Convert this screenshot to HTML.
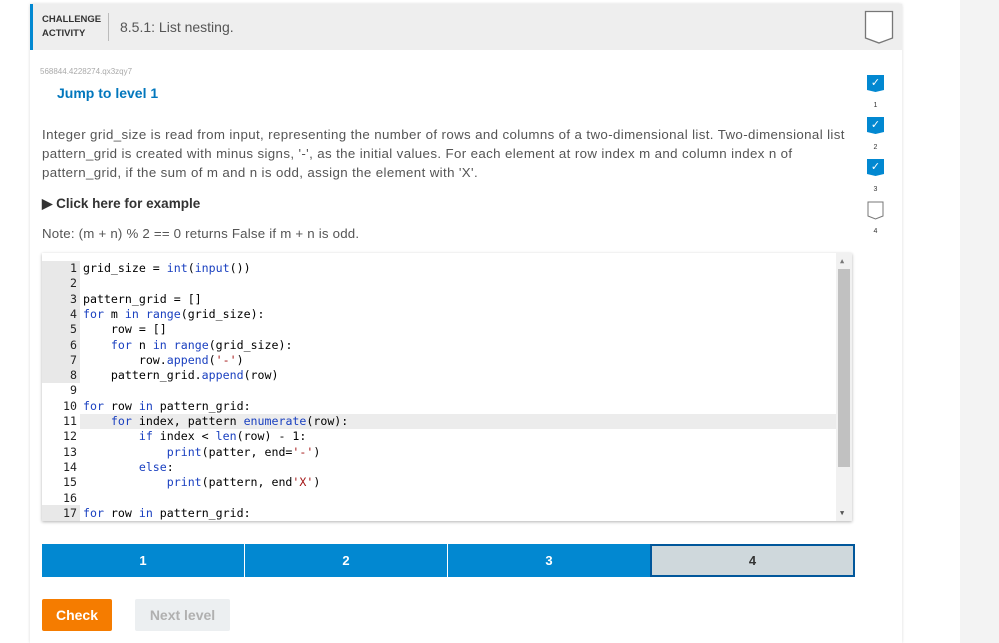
<!DOCTYPE html>
<html><head><style>
body{margin:0;width:999px;height:643px;background:#fff;font-family:"Liberation Sans",sans-serif;position:relative;overflow:hidden}
.a{position:absolute}
.right{left:960px;top:0;width:39px;height:643px;background:#f3f3f3}
.card{left:30px;top:4px;width:872px;height:639px;background:#fff;box-shadow:0 0 3px rgba(0,0,0,.15)}
.hdr{left:30px;top:4px;width:872px;height:46px;background:#eeeeee;border-left:3px solid #0288d1;box-sizing:border-box}
.code{left:42px;top:253px;width:810px;height:268px;background:#fff;box-shadow:0 1px 3px rgba(0,0,0,.3);overflow:hidden;font-family:"DejaVu Sans Mono","Liberation Mono",monospace;font-size:11.6px}
.ln{position:absolute;left:0;width:35px;text-align:right;color:#222;height:15.3px;line-height:15.3px}
.cl{position:absolute;left:41px;white-space:pre;height:15.3px;line-height:15.3px;color:#000}
.k{color:#1a40c0}.f{color:#1a40c0}.s{color:#a31515}
.chk{width:17px;height:17px;background:#0288d1;position:absolute;left:867px;color:#fff;font-size:11px;text-align:center;line-height:16px;clip-path:polygon(0 0,100% 0,100% 88%,50% 100%,0 88%)}
.num{position:absolute;left:867px;width:17px;text-align:center;font-size:7px;color:#333}
.seg{position:absolute;top:544px;height:33px;background:#0288d1;color:#fff;font-weight:bold;font-size:13px;text-align:center;line-height:33px}
</style></head><body>
<div class="a right"></div>
<div class="a card"></div>
<div class="a hdr"></div>
<div class="a" style="left:42px;top:13px;font-size:9.5px;font-weight:bold;color:#333;line-height:14px">CHALLENGE<br>ACTIVITY</div>
<div class="a" style="left:108px;top:13px;width:1px;height:28px;background:#bbb"></div>
<div class="a" style="left:120px;top:19px;font-size:14px;color:#555">8.5.1: List nesting.</div>
<svg class="a" style="left:864px;top:10px" width="30" height="35"><path d="M1.5 1.5H28.5V28L15 33 1.5 28Z" fill="#fff" stroke="#777" stroke-width="1.3"/></svg>
<div class="a" style="left:40px;top:67px;font-size:8px;color:#aaa">568844.4228274.qx3zqy7</div>
<div class="a" style="left:57px;top:85px;font-size:14px;font-weight:bold;color:#0277bd">Jump to level 1</div>
<div class="a" style="left:42px;top:125px;white-space:nowrap;font-size:13.3px;line-height:19px;color:#555;letter-spacing:0.37px">Integer grid_size is read from input, representing the number of rows and columns of a two-dimensional list. Two-dimensional list<br>pattern_grid is created with minus signs, '-', as the initial values. For each element at row index m and column index n of<br>pattern_grid, if the sum of m and n is odd, assign the element with 'X'.</div>
<div class="a" style="left:42px;top:196px;font-size:13.5px;font-weight:bold;color:#333">▶ Click here for example</div>
<div class="a" style="left:42px;top:226px;font-size:13.3px;color:#555;letter-spacing:0.2px">Note: (m + n) % 2 == 0 returns False if m + n is odd.</div>

<div class="chk" style="top:75px">✓</div><div class="num" style="top:102px">1</div>
<div class="chk" style="top:117px">✓</div><div class="num" style="top:144px">2</div>
<div class="chk" style="top:159px">✓</div><div class="num" style="top:186px">3</div>
<svg class="a" style="left:867px;top:201px" width="18" height="19"><path d="M1 1H16V15L8.5 18 1 15Z" fill="#fff" stroke="#777"/></svg><div class="num" style="top:228px">4</div>

<div class="a code">
<div class="a" style="left:0;top:8px;width:38px;height:122px;background:#e8e8e8"></div>
<div class="a" style="left:0;top:252px;width:38px;height:16px;background:#e8e8e8"></div>
<div class="a" style="left:38px;top:161px;width:756px;height:15px;background:#ececec"></div>
<div class="a" style="left:794px;top:0;width:16px;height:268px;background:#f1f1f1"></div>
<div class="a" style="left:796px;top:16px;width:12px;height:198px;background:#c1c1c1"></div>
<div class="a" style="left:798px;top:4px;font-size:7px;color:#777">▲</div>
<div class="a" style="left:798px;top:256px;font-size:7px;color:#555">▼</div>
<div style="position:absolute;top:8px;left:0;width:790px">
<div class="ln" style="top:0">1</div><div class="cl" style="top:0">grid_size = <span class="f">int</span>(<span class="f">input</span>())</div>
<div class="ln" style="top:15.3px">2</div>
<div class="ln" style="top:30.6px">3</div><div class="cl" style="top:30.6px">pattern_grid = []</div>
<div class="ln" style="top:45.9px">4</div><div class="cl" style="top:45.9px"><span class="k">for</span> m <span class="k">in</span> <span class="f">range</span>(grid_size):</div>
<div class="ln" style="top:61.2px">5</div><div class="cl" style="top:61.2px">    row = []</div>
<div class="ln" style="top:76.5px">6</div><div class="cl" style="top:76.5px">    <span class="k">for</span> n <span class="k">in</span> <span class="f">range</span>(grid_size):</div>
<div class="ln" style="top:91.8px">7</div><div class="cl" style="top:91.8px">        row.<span class="f">append</span>(<span class="s">'-'</span>)</div>
<div class="ln" style="top:107.1px">8</div><div class="cl" style="top:107.1px">    pattern_grid.<span class="f">append</span>(row)</div>
<div class="ln" style="top:122.4px">9</div>
<div class="ln" style="top:137.7px">10</div><div class="cl" style="top:137.7px"><span class="k">for</span> row <span class="k">in</span> pattern_grid:</div>
<div class="ln" style="top:153px">11</div><div class="cl" style="top:153px">    <span class="k">for</span> index, pattern <span class="f">enumerate</span>(row):</div>
<div class="ln" style="top:168.3px">12</div><div class="cl" style="top:168.3px">        <span class="k">if</span> index &lt; <span class="f">len</span>(row) - 1:</div>
<div class="ln" style="top:183.6px">13</div><div class="cl" style="top:183.6px">            <span class="f">print</span>(patter, end=<span class="s">'-'</span>)</div>
<div class="ln" style="top:198.9px">14</div><div class="cl" style="top:198.9px">        <span class="k">else</span>:</div>
<div class="ln" style="top:214.2px">15</div><div class="cl" style="top:214.2px">            <span class="f">print</span>(pattern, end<span class="s">'X'</span>)</div>
<div class="ln" style="top:229.5px">16</div>
<div class="ln" style="top:244.8px">17</div><div class="cl" style="top:244.8px"><span class="k">for</span> row <span class="k">in</span> pattern_grid:</div>
</div>
</div>

<div class="seg" style="left:42px;width:202px">1</div>
<div class="seg" style="left:245px;width:202px">2</div>
<div class="seg" style="left:448px;width:202px">3</div>
<div class="seg" style="left:650px;width:205px;background:#cfd8dc;color:#333;border:2px solid #01579b;box-sizing:border-box;line-height:29px">4</div>
<div class="a" style="left:42px;top:599px;width:70px;height:32px;background:#f57c00;color:#fff;font-weight:bold;font-size:14px;text-align:center;line-height:32px;border-radius:2px">Check</div>
<div class="a" style="left:135px;top:599px;width:95px;height:32px;background:#eceff1;color:#b0b0b0;font-weight:bold;font-size:14px;text-align:center;line-height:32px;border-radius:2px">Next level</div>
</body></html>
